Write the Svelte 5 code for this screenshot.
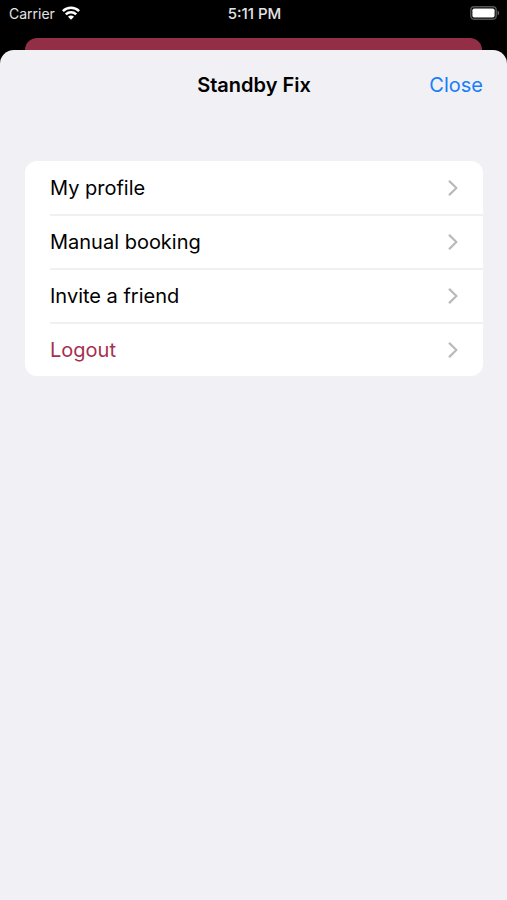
<script>
  let items = [
    { label: "My profile" },
    { label: "Manual booking" },
    { label: "Invite a friend" },
    { label: "Logout", danger: true },
  ];

  export let onClose = () => {};
  export let onSelect = () => {};
</script>

<div class="screen">
  <header class="status-bar">
    <div class="carrier">
      <span>Carrier</span>
      <svg class="wifi" viewBox="0 0 18 14" aria-hidden="true">
        <path d="M0.9 5.2a11.5 11.5 0 0 1 16.2 0" />
        <path d="M3.8 8.3a7.4 7.4 0 0 1 10.4 0" />
        <path class="dot" d="M9 13.8 6 10.8a4.2 4.2 0 0 1 6 0z" />
      </svg>
    </div>
    <span class="time">5:11 PM</span>
    <svg class="battery" viewBox="0 0 30 14" aria-hidden="true">
      <rect class="shell" x="0.8" y="0.8" width="25.4" height="12.4" rx="3.4" />
      <rect class="level" x="2.4" y="2.4" width="22.2" height="9.2" rx="1.8" />
      <path class="cap" d="M27.6 4.6a2.6 2.6 0 0 1 0 4.8z" />
    </svg>
  </header>

  <div class="behind"></div>

  <main class="sheet">
    <div class="nav">
      <h1>Standby Fix</h1>
      <button class="close" on:click={onClose}>Close</button>
    </div>

    <ul class="menu">
      {#each items as item}
        <li>
          <button class="item" class:danger={item.danger} on:click={() => onSelect(item)}>
            <span>{item.label}</span>
            <svg class="chevron" viewBox="0 0 10 16" aria-hidden="true">
              <path d="M1.6 1.4 8.4 8l-6.8 6.6" />
            </svg>
          </button>
        </li>
      {/each}
    </ul>
  </main>
</div>

<style>
  :global(body) {
    margin: 0;
    background: #000;
  }

  .screen {
    display: flex;
    flex-direction: column;
    min-height: 100vh;
    background: #000;
    color: #000;
    font-family: Inter, "Liberation Sans", sans-serif;
  }

  .status-bar {
    display: grid;
    grid-template-columns: 1fr auto 1fr;
    align-items: center;
    height: 26px;
    margin-bottom: 12px;
    padding: 0 7px 0 9px;
    color: #e4e4e4;
    font-size: 14px;
  }

  .carrier {
    display: flex;
    align-items: center;
    gap: 7px;
  }

  .wifi {
    width: 18px;
    height: 14px;
    fill: none;
    stroke: #fff;
    stroke-width: 2.5;
  }

  .wifi .dot {
    fill: #fff;
    stroke: none;
  }

  .time {
    font-size: 15px;
    font-weight: 500;
  }

  .battery {
    justify-self: end;
    width: 30px;
    height: 14px;
  }

  .shell {
    fill: none;
    stroke: #555;
    stroke-width: 1.4;
  }

  .level {
    fill: #fff;
  }

  .cap {
    fill: #666;
  }

  .behind {
    height: 24px;
    margin: 0 25px -12px;
    border-radius: 12px 12px 0 0;
    background: #922e45;
  }

  .sheet {
    position: relative;
    flex: 1;
    padding: 0 24px 0 25px;
    border-radius: 14px 14px 0 0;
    background: #f1f0f5;
  }

  .nav {
    display: grid;
    grid-template-columns: 1fr auto 1fr;
    align-items: center;
    height: 69px;
    margin-bottom: 42px;
  }

  h1 {
    grid-column: 2;
    margin: 0;
    font-size: 20px;
    font-weight: 600;
  }

  button {
    border: none;
    background: none;
    font-family: inherit;
    font-size: 20px;
    cursor: pointer;
  }

  .close {
    justify-self: end;
    padding: 0;
    color: #157efb;
  }

  .menu {
    margin: 0;
    padding: 1px 0 0 25px;
    border-radius: 12px;
    background: #fff;
    list-style: none;
  }

  .menu li + li {
    border-top: 2px solid #f0f0f2;
  }

  .item {
    display: flex;
    align-items: center;
    justify-content: space-between;
    width: 100%;
    height: 52px;
    padding: 0 25px 0 0;
    color: #000;
    text-align: left;
  }

  .item.danger {
    color: #a5304f;
  }

  .chevron {
    width: 10px;
    height: 16px;
    fill: none;
    stroke: #bababc;
    stroke-width: 2.2;
    stroke-linecap: round;
    stroke-linejoin: round;
  }
</style>
